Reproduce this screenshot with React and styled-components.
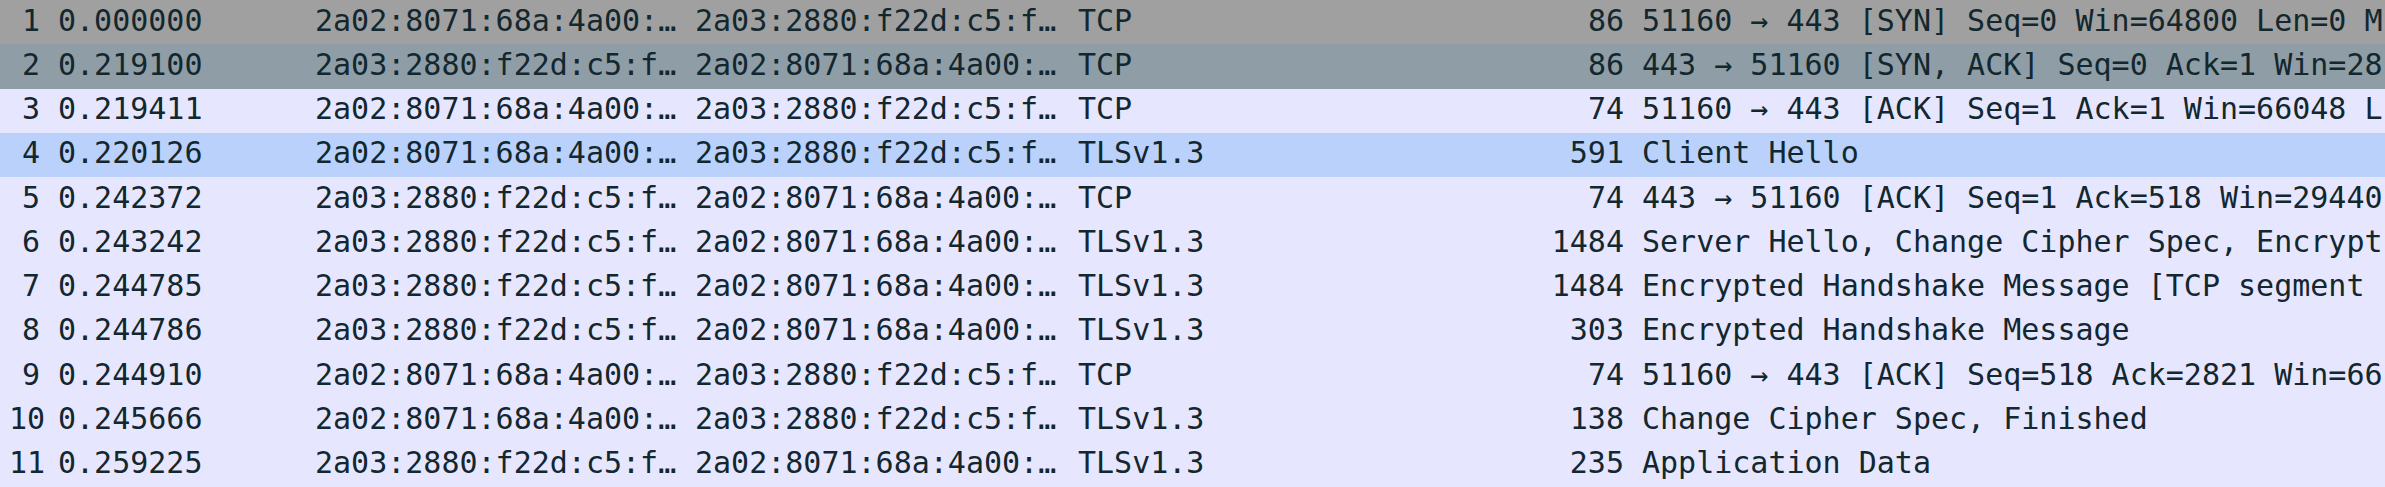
import styled, { createGlobalStyle } from "styled-components";

const GlobalStyle = createGlobalStyle`
  html, body {
    margin: 0;
    padding: 0;
    overflow: hidden;
    background: #e7e6ff;
  }
`;

const rowColors = {
  syn: "#a0a0a0",
  selected: "#8f9da7",
  tcp: "#e7e6ff",
  hover: "#b9d1fb",
};

// info column is cut at the window edge, same as the capture
const packets = [
  { no: 1, time: "0.000000", src: "2a02:8071:68a:4a00:…", dst: "2a03:2880:f22d:c5:f…", proto: "TCP", len: 86, info: "51160 → 443 [SYN] Seq=0 Win=64800 Len=0 M", kind: "syn" },
  { no: 2, time: "0.219100", src: "2a03:2880:f22d:c5:f…", dst: "2a02:8071:68a:4a00:…", proto: "TCP", len: 86, info: "443 → 51160 [SYN, ACK] Seq=0 Ack=1 Win=28", kind: "selected" },
  { no: 3, time: "0.219411", src: "2a02:8071:68a:4a00:…", dst: "2a03:2880:f22d:c5:f…", proto: "TCP", len: 74, info: "51160 → 443 [ACK] Seq=1 Ack=1 Win=66048 L", kind: "tcp" },
  { no: 4, time: "0.220126", src: "2a02:8071:68a:4a00:…", dst: "2a03:2880:f22d:c5:f…", proto: "TLSv1.3", len: 591, info: "Client Hello", kind: "hover" },
  { no: 5, time: "0.242372", src: "2a03:2880:f22d:c5:f…", dst: "2a02:8071:68a:4a00:…", proto: "TCP", len: 74, info: "443 → 51160 [ACK] Seq=1 Ack=518 Win=29440", kind: "tcp" },
  { no: 6, time: "0.243242", src: "2a03:2880:f22d:c5:f…", dst: "2a02:8071:68a:4a00:…", proto: "TLSv1.3", len: 1484, info: "Server Hello, Change Cipher Spec, Encrypt", kind: "tcp" },
  { no: 7, time: "0.244785", src: "2a03:2880:f22d:c5:f…", dst: "2a02:8071:68a:4a00:…", proto: "TLSv1.3", len: 1484, info: "Encrypted Handshake Message [TCP segment", kind: "tcp" },
  { no: 8, time: "0.244786", src: "2a03:2880:f22d:c5:f…", dst: "2a02:8071:68a:4a00:…", proto: "TLSv1.3", len: 303, info: "Encrypted Handshake Message", kind: "tcp" },
  { no: 9, time: "0.244910", src: "2a02:8071:68a:4a00:…", dst: "2a03:2880:f22d:c5:f…", proto: "TCP", len: 74, info: "51160 → 443 [ACK] Seq=518 Ack=2821 Win=66", kind: "tcp" },
  { no: 10, time: "0.245666", src: "2a02:8071:68a:4a00:…", dst: "2a03:2880:f22d:c5:f…", proto: "TLSv1.3", len: 138, info: "Change Cipher Spec, Finished", kind: "tcp" },
  { no: 11, time: "0.259225", src: "2a03:2880:f22d:c5:f…", dst: "2a02:8071:68a:4a00:…", proto: "TLSv1.3", len: 235, info: "Application Data", kind: "tcp" },
];

const PacketList = styled.div`
  display: flex;
  flex-direction: column;
  width: 2385px;
  height: 487px;
  font-family: "DejaVu Sans Mono", "Liberation Mono", monospace;
  font-size: 30px;
  color: #12272e;
`;

const Row = styled.div`
  flex: 1;
  display: grid;
  grid-template-columns: 49px 257px 380px 383px 391px 173px 1fr;
  align-items: center;
  padding-bottom: 4px;
  background: ${(p) => rowColors[p.$kind]};
  white-space: nowrap;
  overflow: hidden;
`;

const Cell = styled.div`
  padding: 0 9px;
  overflow: hidden;
  text-align: ${(p) => (p.$right ? "right" : "left")};
`;

export default function App() {
  return (
    <>
      <GlobalStyle />
      <PacketList>
        {packets.map((p) => (
          <Row key={p.no} $kind={p.kind}>
            <Cell $right>{p.no}</Cell>
            <Cell>{p.time}</Cell>
            <Cell>{p.src}</Cell>
            <Cell>{p.dst}</Cell>
            <Cell>{p.proto}</Cell>
            <Cell $right>{p.len}</Cell>
            <Cell>{p.info}</Cell>
          </Row>
        ))}
      </PacketList>
    </>
  );
}
